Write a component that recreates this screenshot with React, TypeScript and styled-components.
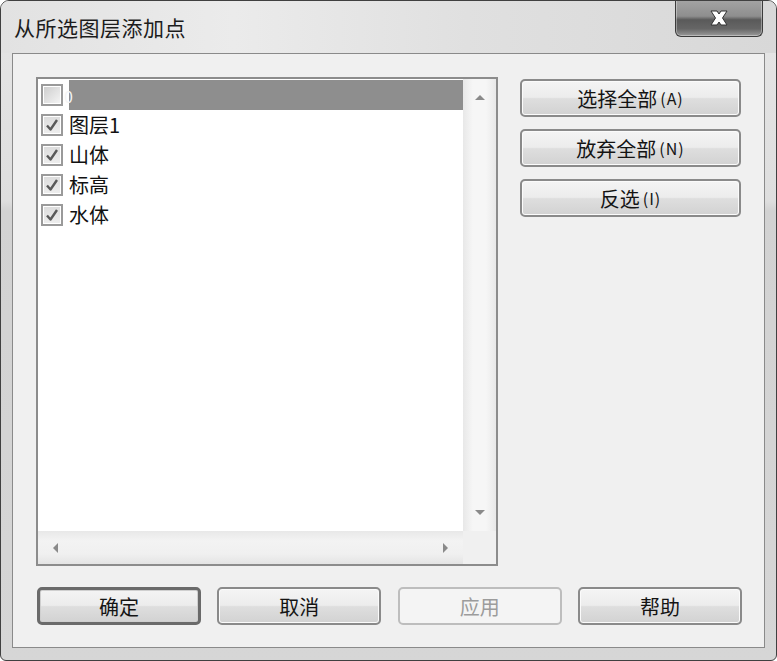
import React from 'react'
import styled, { createGlobalStyle, css } from 'styled-components'

const GlobalStyle = createGlobalStyle`
  html, body {
    margin: 0;
    padding: 0;
    background: #ffffff;
    overflow: hidden;
  }
  * {
    box-sizing: border-box;
  }
`

const FONT = `"Noto Sans CJK SC", "Liberation Sans", sans-serif`

const Window = styled.div`
  width: 777px;
  height: 661px;
  display: flex;
  flex-direction: column;
  border: 1px solid #404040;
  border-radius: 9px 9px 6px 6px;
  background: linear-gradient(180deg, #e6e6e6 0px, #dedede 200px, #d2d2d2 210px, #d6d6d6 661px);
  font-family: ${FONT};
  color: #111;
  overflow: hidden;
`

const TitleBar = styled.div`
  height: 52px;
  display: flex;
  align-items: flex-start;
  padding-left: 13px;
  background: linear-gradient(90deg, #e2e2e2 0%, #ebebeb 30%, #e0e0e0 60%, #d8d8d8 100%);
`

const Title = styled.div`
  margin-top: 12px;
  font-size: 21px;
  line-height: 28px;
  color: #1c1c1c;
  letter-spacing: 0.5px;
`

const CloseButton = styled.div`
  margin-left: auto;
  margin-right: 13px;
  margin-top: -1px;
  width: 88px;
  height: 37px;
  display: flex;
  align-items: center;
  justify-content: center;
  border: 1px solid #3c3c3c;
  border-top: none;
  border-radius: 0 0 6px 6px;
  background: linear-gradient(180deg, #a4a4a4 0%, #8e8e8e 45%, #5a5a5a 55%, #666666 80%, #9a9a9a 100%);
  box-shadow: inset 0 0 0 1px rgba(255, 255, 255, 0.35);
`

const Client = styled.div`
  flex: 1;
  margin: 0 11px 12px 11px;
  border: 1px solid #8a8a8a;
  background: #f0f0f0;
  padding: 23px 22px 22px 23px;
  display: flex;
  flex-direction: column;
  gap: 21px;
`

const Main = styled.div`
  flex: 1;
  display: flex;
  gap: 22px;
`

const ListBox = styled.div`
  width: 462px;
  height: 489px;
  border: 2px solid #8c8c8c;
  background: #ffffff;
  display: grid;
  grid-template-columns: 1fr 33px;
  grid-template-rows: 1fr 33px;
`

const Items = styled.div`
  padding-top: 1px;
  display: flex;
  flex-direction: column;
  overflow: hidden;
`

const Row = styled.div`
  height: 30px;
  display: flex;
  align-items: center;
  padding-left: 3px;
  gap: 6px;
`

const Check = styled.div<{ $checked: boolean }>`
  width: 22px;
  height: 22px;
  flex: none;
  border: 2px solid #9a9a9a;
  background: ${({ $checked }) =>
    $checked
      ? 'linear-gradient(180deg, #dcdcdc, #eeeeee)'
      : 'linear-gradient(135deg, #cccccc, #f6f6f6)'};
  box-shadow: inset 0 0 0 1px #ffffff;
  display: flex;
  align-items: center;
  justify-content: center;
`

const Label = styled.div<{ $selected?: boolean }>`
  flex: 1;
  height: 30px;
  font-size: 20px;
  line-height: 30px;
  white-space: nowrap;
  ${({ $selected }) =>
    $selected &&
    css`
      background: #8e8e8e;
      color: #ffffff;
    `}
`

const ClippedText = styled.span`
  display: inline-block;
  margin-left: -5px;
  font-size: 16px;
  color: #f4f4f4;
`

const VScroll = styled.div`
  background: linear-gradient(90deg, #e8e8e8, #f6f6f6 30%, #f6f6f6 70%, #e8e8e8);
  display: flex;
  flex-direction: column;
  justify-content: space-between;
  align-items: center;
  padding: 14px 0 12px;
`

const HScroll = styled.div`
  background: linear-gradient(180deg, #e8e8e8, #f3f3f3 30%, #f0f0f0 70%, #e4e4e4);
  display: flex;
  justify-content: space-between;
  align-items: center;
  padding: 0 12px 0 12px;
`

const Corner = styled.div`
  background: #f0f0f0;
`

const Side = styled.div`
  width: 221px;
  display: flex;
  flex-direction: column;
  gap: 12px;
  padding-top: 2px;
`

const Button = styled.div<{ $default?: boolean; $disabled?: boolean; $w?: number }>`
  height: 38px;
  width: ${({ $w }) => ($w ? `${$w}px` : '100%')};
  border: 2px solid #8a8a8a;
  border-radius: 5px;
  background: linear-gradient(180deg, #f4f4f4 0%, #ececec 48%, #dedede 52%, #d2d2d2 100%);
  box-shadow: inset 0 0 0 1px #fbfbfb;
  display: flex;
  align-items: center;
  justify-content: center;
  font-size: 20px;
  color: #141414;
  ${({ $default }) =>
    $default &&
    css`
      border: 3px solid #6a6a6a;
      box-shadow: inset 0 0 0 1px #cfcfcf;
    `}
  ${({ $disabled }) =>
    $disabled &&
    css`
      border-color: #bdbdbd;
      background: #f4f4f4;
      box-shadow: none;
      color: #9c9c9c;
    `}
`

const Paren = styled.span`
  font-size: 16px;
  margin-left: 3px;
  letter-spacing: 1px;
`

const Footer = styled.div`
  display: flex;
  justify-content: space-between;
  padding-left: 1px;
`

const CheckMark = () => (
  <svg width="16" height="16" viewBox="0 0 16 16">
    <path d="M3 8.5 L6.5 12.5 L13 3" fill="none" stroke="#5a5a5a" strokeWidth="2.4" strokeLinejoin="round" />
  </svg>
)

const CloseX = () => (
  <svg width="22" height="18" viewBox="0 0 22 18">
    <path
      d="M3 2 L9 2 L11 5 L13 2 L19 2 L14.5 9 L19 16 L13 16 L11 13 L9 16 L3 16 L7.5 9 Z"
      fill="#ffffff"
      stroke="#333"
      strokeWidth="1"
      strokeLinejoin="round"
    />
  </svg>
)

const Arrow = ({ dir }: { dir: 'up' | 'down' | 'left' | 'right' }) => {
  const paths = {
    up: 'M1 7 L6 2 L11 7 Z',
    down: 'M1 3 L6 8 L11 3 Z',
    left: 'M8 1 L3 6 L8 11 Z',
    right: 'M4 1 L9 6 L4 11 Z',
  }
  return (
    <svg width="12" height="12" viewBox="0 0 12 12">
      <path d={paths[dir]} fill="#8a8a8a" />
    </svg>
  )
}

const layers = [
  { name: '0', checked: false },
  { name: '图层1', checked: true },
  { name: '山体', checked: true },
  { name: '标高', checked: true },
  { name: '水体', checked: true },
]

const App = () => {
  return (
    <>
      <GlobalStyle />
      <Window>
        <TitleBar>
          <Title>从所选图层添加点</Title>
          <CloseButton>
            <CloseX />
          </CloseButton>
        </TitleBar>
        <Client>
          <Main>
            <ListBox>
              <Items>
                {layers.map((l, i) => (
                  <Row key={l.name}>
                    <Check $checked={l.checked}>{l.checked && <CheckMark />}</Check>
                    <Label $selected={i === 0}>
                      {i === 0 ? <ClippedText>{l.name}</ClippedText> : l.name}
                    </Label>
                  </Row>
                ))}
              </Items>
              <VScroll>
                <Arrow dir="up" />
                <Arrow dir="down" />
              </VScroll>
              <HScroll>
                <Arrow dir="left" />
                <Arrow dir="right" />
              </HScroll>
              <Corner />
            </ListBox>
            <Side>
              <Button>
                选择全部<Paren>(A)</Paren>
              </Button>
              <Button>
                放弃全部<Paren>(N)</Paren>
              </Button>
              <Button>
                反选<Paren>(I)</Paren>
              </Button>
            </Side>
          </Main>
          <Footer>
            <Button $default $w={164}>确定</Button>
            <Button $w={164}>取消</Button>
            <Button $disabled $w={164}>应用</Button>
            <Button $w={164}>帮助</Button>
          </Footer>
        </Client>
      </Window>
    </>
  )
}

export default App
